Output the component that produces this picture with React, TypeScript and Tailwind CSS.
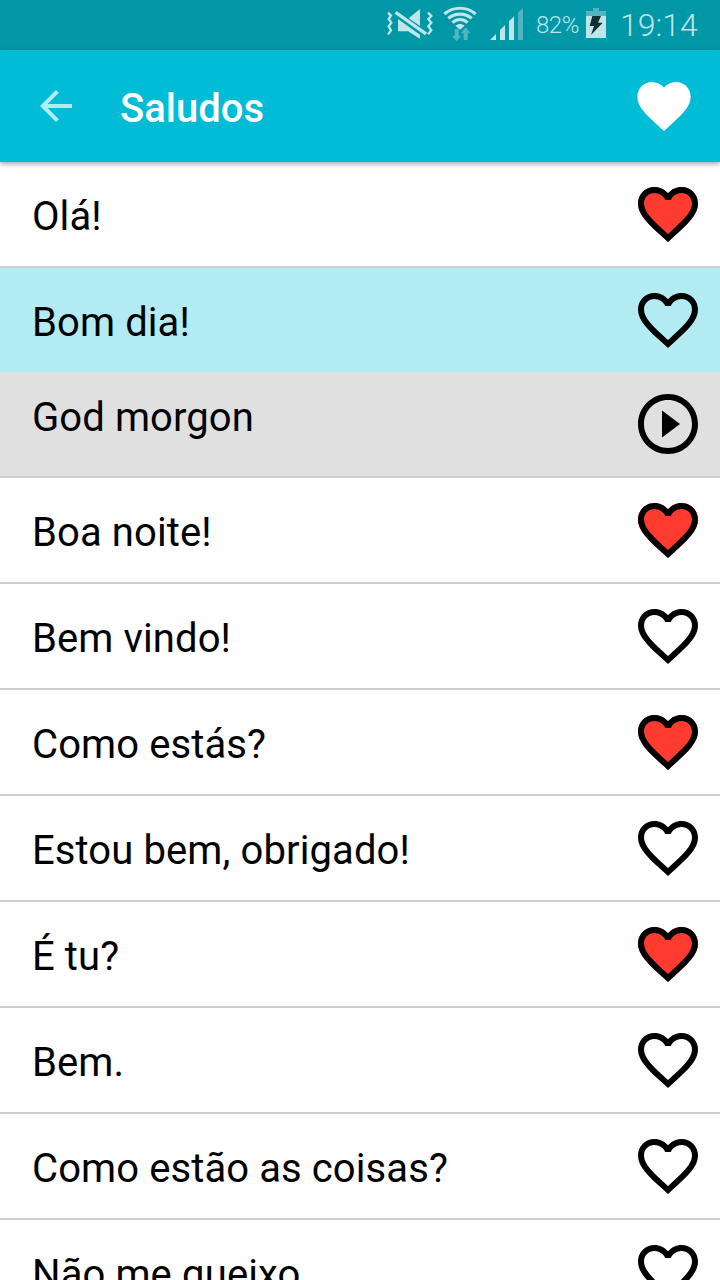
type Phrase = {
  text: string
  favorite?: boolean
  translation?: string
}

const PHRASES: Phrase[] = [
  { text: 'Olá!', favorite: true },
  { text: 'Bom dia!', translation: 'God morgon' },
  { text: 'Boa noite!', favorite: true },
  { text: 'Bem vindo!' },
  { text: 'Como estás?', favorite: true },
  { text: 'Estou bem, obrigado!' },
  { text: 'É tu?', favorite: true },
  { text: 'Bem.' },
  { text: 'Como estão as coisas?' },
  { text: 'Não me queixo.' },
]

const HEART =
  'M12 21.35l-1.45-1.32C5.4 15.36 2 12.28 2 8.5 2 5.42 4.42 3 7.5 3c1.74 0 3.41.81 4.5 2.09C13.09 3.81 14.76 3 16.5 3 19.58 3 22 5.42 22 8.5c0 3.78-3.4 6.86-8.55 11.54L12 21.35z'

const HEART_BORDER =
  'M16.5 3c-1.74 0-3.41.81-4.5 2.09C10.91 3.81 9.24 3 7.5 3 4.42 3 2 5.42 2 8.5c0 3.78 3.4 6.86 8.55 11.54L12 21.35l1.45-1.32C18.6 15.36 22 12.28 22 8.5 22 5.42 19.58 3 16.5 3zm-4.4 15.55l-.1.1-.1-.1C7.14 14.24 4 11.39 4 8.5 4 6.5 5.5 5 7.5 5c1.54 0 3.04.99 3.57 2.36h1.87C13.46 5.99 14.96 5 16.5 5c2 0 3.5 1.5 3.5 3.5 0 2.89-3.14 5.74-7.9 10.05z'

function HeartIcon({ filled }: { filled?: boolean }) {
  return (
    <svg viewBox="0 0 24 24" className="size-[72px] shrink-0" aria-hidden="true">
      {filled && <path d={HEART} fill="#ff3b2f" />}
      <path d={HEART_BORDER} fill="#000" />
    </svg>
  )
}

function PlayIcon() {
  return (
    <svg viewBox="0 0 24 24" className="size-[72px] shrink-0" aria-hidden="true">
      <path d="M10 16.5l6-4.5-6-4.5v9zM12 2C6.48 2 2 6.48 2 12s4.48 10 10 10 10-4.48 10-10S17.52 2 12 2zm0 18c-4.41 0-8-3.59-8-8s3.59-8 8-8 8 3.59 8 8-3.59 8-8 8z" />
    </svg>
  )
}

function StatusBar() {
  return (
    <div className="flex h-[50px] items-start bg-[#0097a7] pl-[385px] text-[#bfe5e9]">
      {/* Muted, vibrate */}
      <svg viewBox="15 24 150 96" className="mt-2 h-8 w-[50px] shrink-0" fill="currentColor">
        <path d="M54 57l66 47v12L84 94H54z" />
        <path d="M120 27v51L86 55z" />
        <path d="M51 40l83 59" stroke="currentColor" strokeWidth="10" strokeLinecap="square" />
        <g fill="none" stroke="currentColor" strokeWidth="7">
          <path d="M24 38l9 9-7 10 8 11-8 11 7 12-9 12" />
          <path d="M144 38l10 10-9 9 9 11-9 11 9 12-10 12" />
        </g>
      </svg>

      {/* Wi-Fi with traffic arrows */}
      <svg viewBox="186 15 108 111" className="ml-[7px] mt-[5px] h-[37px] w-9 shrink-0">
        <g fill="none" stroke="currentColor" strokeWidth="9.5">
          <path d="M193 42c27-23 67-23 94 0" />
          <path d="M205 55c20-17 50-17 70 0" />
          <path d="M217 68c14-12 32-12 46 0" />
        </g>
        <path d="M226 77c8-7 20-7 28 0l-14 12z" fill="currentColor" />
        <path d="M224 87h12v20h8l-14 17-14-17h8z" fill="#51b4be" />
        <path d="M251 120h12v-20h8l-14-19-14 19h8z" fill="#51b4be" />
      </svg>

      {/* Signal */}
      <svg viewBox="327 24 105 96" className="ml-[11px] mt-2 h-8 w-[35px] shrink-0" fill="currentColor">
        <path d="M330 120l18-18v18zM360 120V90l15-15v45zM387 120V64l15-15v71z" />
        <path d="M414 120V38l15-14v96z" fill="#51b4be" />
      </svg>

      <span className="ml-3 w-[50px] pt-[11px] text-2xl font-[350] leading-[28px] tracking-[-0.5px]">82%</span>

      {/* Charging battery */}
      <svg viewBox="198 24 60 90" className="mt-2 h-[30px] w-5 shrink-0">
        <path d="M198 33h21v-9h18v9h21v15h-60z" fill="#51b4be" />
        <path d="M198 48h60v66h-60z" fill="currentColor" />
        <path d="M217 48h26l-9 20h14l-35 37 9-27h-13z" fill="#102f36" />
      </svg>

      <span className="ml-[14px] pt-[6px] text-[32px] font-[350] leading-[38px]">19:14</span>
    </div>
  )
}

function AppBar() {
  return (
    <header className="relative z-10 flex h-28 items-center bg-[#00bcd7] pl-8 pr-6 text-white shadow-[0_2px_5px_rgba(0,0,0,.35)]">
      <svg viewBox="0 0 24 24" className="size-12 fill-[#b3ebf3]" aria-label="Back">
        <path d="M20 11H7.83l5.59-5.59L12 4l-8 8 8 8 1.41-1.41L7.83 13H20v-2z" />
      </svg>
      <h1 className="ml-10 flex-1 pt-1.5 text-[40px] font-medium leading-[48px]">Saludos</h1>
      <svg viewBox="0 0 24 24" className="size-16 fill-white" aria-label="Favorites">
        <path d={HEART} />
      </svg>
    </header>
  )
}

function PhraseItem({ phrase }: { phrase: Phrase }) {
  return (
    <li className="border-b-2 border-[#cfcfcf]">
      <div className={`flex h-[104px] items-center justify-between pl-8 pr-4 ${phrase.translation ? 'bg-[#b2ebf2]' : ''}`}>
        <span className="pt-1.5">{phrase.text}</span>
        <HeartIcon filled={phrase.favorite} />
      </div>
      {phrase.translation && (
        <div className="flex h-[104px] items-center justify-between bg-[#e0e0e0] pl-8 pr-4">
          <span className="pb-3">{phrase.translation}</span>
          <PlayIcon />
        </div>
      )}
    </li>
  )
}

export default function App() {
  return (
    <div className="flex h-[1280px] w-[720px] flex-col overflow-hidden bg-white font-['Roboto',sans-serif] text-black">
      <StatusBar />
      <AppBar />
      <ul className="min-h-0 flex-1 overflow-hidden text-[40px] leading-[48px] tracking-[0.1px]">
        {PHRASES.map((phrase) => (
          <PhraseItem key={phrase.text} phrase={phrase} />
        ))}
      </ul>
    </div>
  )
}
